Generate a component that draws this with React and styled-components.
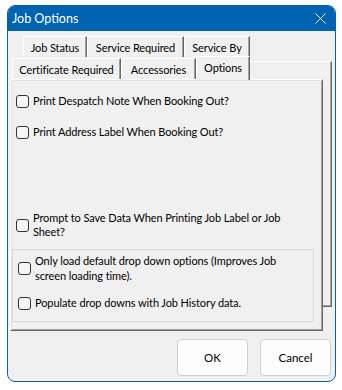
import styled, { createGlobalStyle } from "styled-components";

const GlobalStyle = createGlobalStyle`
  html, body {
    margin: 0;
    padding: 0;
    background: #ffffff;
  }
  body {
    font-family: Lato, "Liberation Sans", Arial, sans-serif;
    font-size: 11px;
    letter-spacing: -0.1px;
    color: #000;
  }
`;

const Window = styled.div`
  box-sizing: border-box;
  margin: 5px 0 0 7px;
  width: 329px;
  height: 377px;
  border: 1px solid #0063b1;
  border-radius: 8px;
  background: #f0f0f0;
  overflow: hidden;
  display: flex;
  flex-direction: column;
`;

const TitleBar = styled.div`
  height: 25px;
  background: #0063b1;
  color: #fff;
  display: flex;
  align-items: center;
  justify-content: space-between;
  padding: 0 9px 0 4px;
  font-size: 12.5px;
  letter-spacing: 0;
`;

const Body = styled.div`
  flex: 1;
  padding: 5px 3px 5px 2px;
  display: flex;
  flex-direction: column;
`;

const TabRow = styled.div`
  display: flex;
  align-items: flex-end;
  height: ${(p) => p.h}px;
  margin-left: ${(p) => p.offset}px;
  position: relative;
  z-index: 2;
`;

const Tab = styled.div`
  box-sizing: border-box;
  width: ${(p) => p.w}px;
  height: ${(p) => (p.active ? 24 : 21)}px;
  margin-bottom: ${(p) => (p.active ? -1 : 0)}px;
  background: #f0f0f0;
  border-top: 1px solid #ffffff;
  border-left: 1px solid #ffffff;
  border-right: 1px solid #696969;
  box-shadow: inset -1px 0 #a0a0a0;
  display: flex;
  align-items: center;
  justify-content: center;
  padding-bottom: ${(p) => (p.active ? 2 : 0)}px;
  white-space: nowrap;
`;

const Stack = styled.div`
  display: grid;
  height: 274px;
`;

const BackSheet = styled.div`
  grid-area: 1 / 1;
  margin: 4px 0 24px 10px;
  border-top: 1px solid #ffffff;
  border-right: 1px solid #696969;
  border-bottom: 1px solid #696969;
  box-shadow: inset -1px -1px #a0a0a0;
`;

const FrontSheet = styled.div`
  grid-area: 1 / 1;
  margin-right: 9px;
  display: flex;
  flex-direction: column;
  position: relative;
`;

const Panel = styled.div`
  box-sizing: border-box;
  height: 252px;
  background: #f0f0f0;
  border: 1px solid;
  border-color: #ffffff #696969 #696969 #ffffff;
  box-shadow: inset 1px 1px #e3e3e3, inset -1px -1px #a0a0a0;
  padding: 14px 8px 0 1px;
  display: flex;
  flex-direction: column;
`;

const CheckRow = styled.label`
  display: flex;
  align-items: center;
  gap: 4px;
  margin-top: ${(p) => p.top || 0}px;
  margin-left: ${(p) => p.indent || 0}px;
  line-height: ${(p) => p.lh || 14}px;
  white-space: nowrap;
`;

const Box = styled.span`
  box-sizing: border-box;
  flex: none;
  width: 13px;
  height: 13px;
  border: 1px solid #333333;
  border-radius: 3px;
  background: #f6f6f6;
`;

const GroupBox = styled.div`
  margin-top: 10px;
  border: 1px solid #d9d9d9;
  padding: 3px 0 11px 5px;
  display: flex;
  flex-direction: column;
`;

const ButtonRow = styled.div`
  display: flex;
  justify-content: flex-end;
  gap: 12px;
  margin-top: 8px;
  padding-right: 1px;
`;

const Button = styled.button`
  box-sizing: border-box;
  width: 71px;
  height: 37px;
  border: 1px solid #d0d0d0;
  border-radius: 4px;
  background: #fdfdfd;
  font-family: Lato, "Liberation Sans", Arial, sans-serif;
  font-size: 11.5px;
  color: #000;
`;

function Check({ children, ...rest }) {
  return (
    <CheckRow {...rest}>
      <Box />
      <span>{children}</span>
    </CheckRow>
  );
}

export default function App() {
  return (
    <>
      <GlobalStyle />
      <Window>
        <TitleBar>
          <span>Job Options</span>
          <svg width="11" height="11" viewBox="0 0 11 11">
            <path d="M0.5 0.5 L10.5 10.5 M10.5 0.5 L0.5 10.5" stroke="#fff" strokeWidth="1" />
          </svg>
        </TitleBar>
        <Body>
          <TabRow h={21} offset={13}>
            <Tab w={64}>Job Status</Tab>
            <Tab w={97}>Service Required</Tab>
            <Tab w={66}>Service By</Tab>
          </TabRow>
          <Stack>
            <BackSheet />
            <FrontSheet>
              <TabRow h={22} offset={2}>
                <Tab w={109}>Certificate Required</Tab>
                <Tab w={75}>Accessories</Tab>
                <Tab w={54} active>
                  Options
                </Tab>
              </TabRow>
              <Panel>
                <Check indent={4}>Print Despatch Note When Booking Out?</Check>
                <Check indent={4} top={17}>
                  Print Address Label When Booking Out?
                </Check>
                <Check indent={4} top={72}>
                  Prompt to Save Data When Printing Job Label or Job
                  <br />
                  Sheet?
                </Check>
                <GroupBox>
                  <Check lh={15}>
                    Only load default drop down options (Improves Job
                    <br />
                    screen loading time).
                  </Check>
                  <Check top={13}>Populate drop downs with Job History data.</Check>
                </GroupBox>
              </Panel>
            </FrontSheet>
          </Stack>
          <ButtonRow>
            <Button>OK</Button>
            <Button>Cancel</Button>
          </ButtonRow>
        </Body>
      </Window>
    </>
  );
}
